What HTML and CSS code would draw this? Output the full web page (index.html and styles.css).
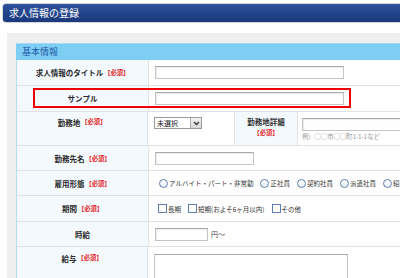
FILE: index.html
```html
<!DOCTYPE html>
<html lang="ja">
<head>
<meta charset="utf-8">
<link rel="stylesheet" href="styles.css">
</head>
<body>
<div class="titlebar">求人情報の登録</div>
<div class="panel">
  <div class="section">
    <div class="sec-head">基本情報</div>
    <div class="row h26">
      <div class="lab">求人情報のタイトル<span class="req">【必須】</span></div>
      <div class="val"><span class="inp w189"></span></div>
    </div>
    <div class="row h26">
      <div class="lab">サンプル</div>
      <div class="val"><span class="inp w189"></span></div>
    </div>
    <div class="row h34">
      <div class="lab top5">勤務地<span class="req">【必須】</span></div>
      <div class="val split">
        <div class="selcell">
          <div class="select"><span class="seltext">未選択</span><span class="selbtn"><svg width="7" height="5" viewBox="0 0 7 5"><path d="M1 1 L3.5 3.5 L6 1" fill="none" stroke="#333" stroke-width="1.3"/></svg></span></div>
        </div>
        <div class="sublab">勤務地詳細<br><span class="req">【必須】</span></div>
        <div class="subval">
          <span class="inp w150"></span>
          <div class="hint">例）○○市○○町1-1-1など</div>
        </div>
      </div>
    </div>
    <div class="row h25">
      <div class="lab">勤務先名<span class="req">【必須】</span></div>
      <div class="val"><span class="inp w99"></span></div>
    </div>
    <div class="row h25">
      <div class="lab">雇用形態<span class="req">【必須】</span></div>
      <div class="val opts">
        <span class="opt"><span class="radio"></span>アルバイト・パート・非常勤</span>
        <span class="opt"><span class="radio"></span>正社員</span>
        <span class="opt"><span class="radio"></span>契約社員</span>
        <span class="opt"><span class="radio"></span>派遣社員</span>
        <span class="opt"><span class="radio"></span>紹介</span>
      </div>
    </div>
    <div class="row h26">
      <div class="lab">期間<span class="req">【必須】</span></div>
      <div class="val opts chk">
        <span class="opt"><span class="check"></span>長期</span>
        <span class="opt"><span class="check"></span>短期(およそ6ヶ月以内)</span>
        <span class="opt"><span class="check"></span>その他</span>
      </div>
    </div>
    <div class="row h25">
      <div class="lab">時給</div>
      <div class="val"><span class="inp w53"></span><span class="unit">円〜</span></div>
    </div>
    <div class="row h40">
      <div class="lab top6">給与<span class="req">【必須】</span></div>
      <div class="val topval"><span class="textarea"></span></div>
    </div>
  </div>
</div>
<div class="annot"></div>
</body>
</html>
```
FILE: styles.css
```css
html, body {
  margin: 0;
  padding: 0;
  background: #ffffff;
  overflow: hidden;
  font-family: "Noto Sans CJK JP", "Noto Sans", sans-serif;
  color: #333333;
}
body {
  width: 400px;
  height: 278px;
  position: relative;
}
.titlebar {
  margin: 3px 0 0 2px;
  height: 18px;
  border: 1px solid #d6d6d6;
  border-right: none;
  border-radius: 4px 0 0 4px;
  background: linear-gradient(#2d519e, #1b387b);
  color: #ffffff;
  font-size: 10px;
  line-height: 18px;
  padding-left: 6px;
  white-space: nowrap;
}
.panel {
  margin: 10px 0 0 7px;
  padding: 10px 0 0 9px;
  background: #efefef;
  height: 300px;
}
.section {
  width: 384px;
  box-sizing: border-box;
  background: #ffffff;
  border-left: 1px solid #b9dcf2;
}
.sec-head {
  height: 17px;
  margin-left: -1px;
  background: #7ecdf3;
  border-top: 1px solid #9fdaf6;
  box-sizing: border-box;
  color: #1b58a8;
  font-size: 9px;
  line-height: 16px;
  padding-left: 6px;
}
.row {
  display: flex;
  box-sizing: border-box;
  border-bottom: 1px solid #e2e2e2;
}
.h25 { height: 25px; }
.h26 { height: 26px; }
.h34 { height: 34px; }
.h40 { height: 40px; }
.lab {
  width: 131px;
  flex: none;
  background: #f4f9fe;
  border-right: 1px solid #e2e2e2;
  display: flex;
  align-items: center;
  justify-content: center;
  font-size: 7.5px;
  font-weight: bold;
  color: #2a2a2a;
  white-space: nowrap;
}
.lab.top5 { align-items: flex-start; padding-top: 5px; box-sizing: border-box; }
.lab.top6 { align-items: flex-start; padding-top: 6px; box-sizing: border-box; }
.req {
  color: #e41a1a;
  font-size: 6.3px;
  font-weight: bold;
  margin-left: 1px;
}
.val {
  flex: 1;
  min-width: 0;
  display: flex;
  align-items: center;
  padding-left: 6px;
  font-size: 7px;
  white-space: nowrap;
  overflow: hidden;
}
.val.topval { align-items: flex-start; padding-top: 7px; }
.inp {
  display: block;
  flex: none;
  height: 13px;
  box-sizing: border-box;
  background: #ffffff;
  border: 1px solid #c4c4c4;
  border-top-color: #a9a9a9;
  box-shadow: inset 1px 1px 1px #ececec;
}
.w189 { width: 189px; }
.w150 { width: 150px; }
.w99 { width: 99px; }
.w53 { width: 53px; }
.unit { margin-left: 3px; color: #444; }
.textarea {
  display: block;
  flex: none;
  width: 194px;
  height: 40px;
  box-sizing: border-box;
  border: 1px solid #c4c4c4;
  border-top-color: #a9a9a9;
  background: #fff;
}
.val.split {
  padding-left: 0;
  align-items: stretch;
}
.selcell {
  width: 86px;
  flex: none;
  box-sizing: border-box;
  padding: 5px 0 0 6px;
}
.select {
  width: 48px;
  height: 12px;
  box-sizing: border-box;
  border: 1px solid #9a9a9a;
  display: flex;
  background: #fff;
}
.seltext {
  flex: 1;
  font-size: 7px;
  line-height: 10px;
  padding-left: 2px;
  color: #222;
}
.selbtn {
  width: 10px;
  background: linear-gradient(#f2f2f2, #d6d6d6);
  border-left: 1px solid #b0b0b0;
  display: flex;
  align-items: center;
  justify-content: center;
}
.sublab {
  width: 64px;
  flex: none;
  box-sizing: border-box;
  background: #f4f9fe;
  border-left: 1px solid #e2e2e2;
  border-right: 1px solid #e2e2e2;
  text-align: center;
  font-size: 7.5px;
  font-weight: bold;
  line-height: 10px;
  padding-top: 5px;
}
.sublab .req { margin-left: 0; }
.subval {
  flex: none;
  padding: 6px 0 0 4px;
}
.hint {
  font-size: 6.3px;
  color: #999999;
  line-height: 9px;
  margin-top: 1px;
}
.opts { padding-left: 10px; }
.opts.chk { padding-left: 9px; }
.opt {
  display: inline-flex;
  align-items: center;
  flex: none;
  margin-right: 7px;
  color: #333;
  font-size: 6.5px;
}
.radio {
  display: inline-block;
  width: 7px;
  height: 7px;
  border-radius: 50%;
  border: 1px solid #5d7fb3;
  background: linear-gradient(#ffffff, #e6edf6);
  margin-right: 1px;
}
.check {
  display: inline-block;
  width: 7px;
  height: 7px;
  border: 1px solid #5d7fb3;
  background: #fff;
  margin-right: 1px;
}
.annot {
  position: absolute;
  left: 33px;
  top: 88px;
  width: 318px;
  height: 20px;
  box-sizing: border-box;
  border: 2px solid #ee0000;
}
```
